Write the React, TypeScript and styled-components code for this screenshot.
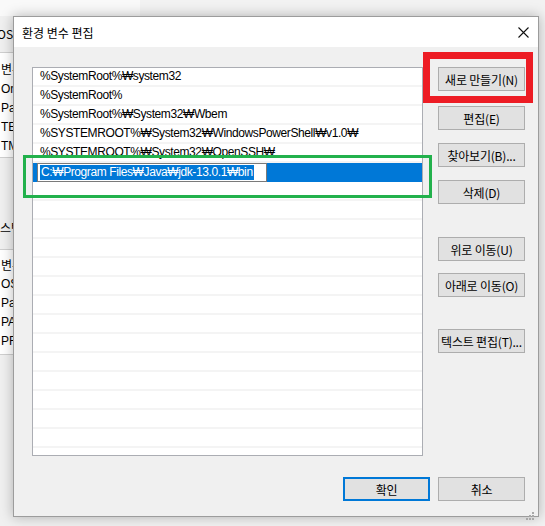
import React from "react";
import styled, { createGlobalStyle } from "styled-components";

const GlobalStyle = createGlobalStyle`
  html, body { margin: 0; padding: 0; width: 545px; height: 526px; overflow: hidden; background: #f2f2f2; }
  #root { width: 545px; height: 526px; }
  * { box-sizing: border-box; }
`;

const KR = `"Noto Sans CJK KR", "Liberation Sans", sans-serif`;
const LATIN = `"Liberation Sans", "DejaVu Sans", "Noto Sans CJK KR", sans-serif`;

const Desktop = styled.div`
  position: relative;
  width: 545px;
  height: 526px;
  overflow: hidden;
  background: #f2f2f2;
  font-family: ${KR};
`;

/* ---------- window behind ---------- */
const BackWindow = styled.div`
  position: absolute;
  left: 0;
  top: 0;
  width: 140px;
  height: 526px;
  display: flex;
  flex-direction: column;
  background: #f0f0f0;
  font-size: 12px;
  color: #000;
`;

const BackTop = styled.div`
  height: 16px;
  background: #f9f9f9;
`;

const BackHeader = styled.div`
  height: 37px;
  display: flex;
  align-items: center;
  padding-bottom: 2px;
  border-bottom: 1px solid #cfcfcf;
  white-space: nowrap;
`;

const BackList = styled.div<{ $h: number }>`
  height: ${(p) => p.$h}px;
  background: #fff;
  border-bottom: 1px solid #cfcfcf;
  padding-top: 4px;
  display: flex;
  flex-direction: column;
`;

const BackRow = styled.div<{ $h?: number }>`
  height: ${(p) => p.$h ?? 19}px;
  display: flex;
  align-items: center;
  padding-left: 1px;
  white-space: nowrap;
  font-family: ${LATIN};
`;

const BackGap = styled.div`
  height: 92px;
  display: flex;
  align-items: flex-end;
  padding-bottom: 13px;
  border-bottom: 1px solid #cfcfcf;
  white-space: nowrap;
`;

const Cut = styled.span<{ $shift: number }>`
  margin-left: ${(p) => p.$shift}px;
`;

/* ---------- dialog ---------- */
const Dialog = styled.div`
  position: absolute;
  left: 13px;
  top: 16px;
  width: 526px;
  height: 501px;
  border: 1px solid #9c9c9c;
  background: #f0f0f0;
  box-shadow: 0 0 12px rgba(0, 0, 0, 0.28);
  display: flex;
  flex-direction: column;
`;

const TitleBar = styled.div`
  height: 30px;
  background: #fff;
  display: flex;
  align-items: center;
  justify-content: space-between;
  padding-left: 8px;
`;

const Title = styled.span`
  font-size: 12px;
  color: #000;
  font-family: ${KR};
`;

const CloseButton = styled.div`
  width: 30px;
  height: 30px;
  display: flex;
  align-items: center;
  justify-content: center;
`;

const Body = styled.div`
  flex: 1;
  padding: 20px 13px 0 18px;
  display: flex;
  flex-direction: column;
`;

const MainRow = styled.div`
  display: flex;
  gap: 15px;
`;

const ListBox = styled.div`
  width: 391px;
  height: 389px;
  background: #fff;
  border: 1px solid #abadb3;
  overflow: hidden;
  display: flex;
  flex-direction: column;
`;

const ListRow = styled.div<{ $selected?: boolean }>`
  flex: none;
  height: 19px;
  display: flex;
  align-items: center;
  padding-left: ${(p) => (p.$selected ? 4 : 7)}px;
  border-bottom: ${(p) => (p.$selected ? "none" : "2px solid #f4f4f4")};
  background: ${(p) => (p.$selected ? "#0078d7" : "#fff")};
  font-family: ${LATIN};
  font-size: 12px;
  line-height: 15px;
  letter-spacing: -0.4px;
  color: #000;
  white-space: nowrap;
  overflow: hidden;
`;

const EditBox = styled.div`
  width: 230px;
  height: 19px;
  border: 1px solid #7a7a7a;
  background: #fff;
  display: flex;
  align-items: center;
  padding-left: 2px;
`;

const Selection = styled.span`
  background: #0078d7;
  color: #fff;
  line-height: 15px;
  padding: 0 1px;
`;

const ButtonColumn = styled.div`
  width: 87px;
  display: flex;
  flex-direction: column;
`;

const Button = styled.div<{ $mt?: number; $default?: boolean }>`
  width: 87px;
  height: 24px;
  margin-top: ${(p) => p.$mt ?? 0}px;
  background: #e1e1e1;
  border: ${(p) => (p.$default ? "2px solid #0078d7" : "1px solid #adadad")};
  display: flex;
  align-items: center;
  justify-content: center;
  font-family: ${KR};
  font-size: 12px;
  color: #000;
  white-space: nowrap;
  letter-spacing: -0.2px;
  overflow: hidden;
`;

const Footer = styled.div`
  margin-top: 21px;
  display: flex;
  justify-content: flex-end;
  gap: 8px;
`;

const Grip = styled.div`
  position: absolute;
  right: 3px;
  bottom: 4px;
  width: 10px;
  height: 10px;
`;

/* ---------- annotations ---------- */
const Highlight = styled.div<{ $x: number; $y: number; $w: number; $h: number; $c: string; $b: number }>`
  position: absolute;
  left: ${(p) => p.$x}px;
  top: ${(p) => p.$y}px;
  width: ${(p) => p.$w}px;
  height: ${(p) => p.$h}px;
  border: ${(p) => p.$b}px solid ${(p) => p.$c};
  pointer-events: none;
`;

const paths = [
  "%SystemRoot%₩system32",
  "%SystemRoot%",
  "%SystemRoot%₩System32₩Wbem",
  "%SYSTEMROOT%₩System32₩WindowsPowerShell₩v1.0₩",
  "%SYSTEMROOT%₩System32₩OpenSSH₩",
];

const buttons: { label: string; mt: number }[] = [
  { label: "새로 만들기(N)", mt: 0 },
  { label: "편집(E)", mt: 15 },
  { label: "찾아보기(B)...", mt: 13 },
  { label: "삭제(D)", mt: 13 },
  { label: "위로 이동(U)", mt: 33 },
  { label: "아래로 이동(O)", mt: 12 },
  { label: "텍스트 편집(T)...", mt: 32 },
];

export default function App() {
  return (
    <Desktop>
      <GlobalStyle />
      <BackWindow>
        <BackTop />
        <BackHeader>
          <Cut $shift={-3}>OS</Cut>
        </BackHeader>
        <BackList $h={105}>
          <BackRow $h={22}>변수</BackRow>
          <BackRow>OneDrive</BackRow>
          <BackRow>Path</BackRow>
          <BackRow>TEMP</BackRow>
          <BackRow>TMP</BackRow>
        </BackList>
        <BackGap>
          <Cut $shift={-11}>시스템 변수</Cut>
        </BackGap>
        <BackList $h={105}>
          <BackRow $h={20}>변수</BackRow>
          <BackRow>OS</BackRow>
          <BackRow>Path</BackRow>
          <BackRow>PATHEXT</BackRow>
          <BackRow>PROCESSOR</BackRow>
        </BackList>
      </BackWindow>

      <Dialog>
        <TitleBar>
          <Title>환경 변수 편집</Title>
          <CloseButton>
            <svg width="11" height="11" viewBox="0 0 11 11">
              <path d="M0.5 0.5 L10.5 10.5 M10.5 0.5 L0.5 10.5" stroke="#111" strokeWidth="1.1" fill="none" />
            </svg>
          </CloseButton>
        </TitleBar>
        <Body>
          <MainRow>
            <ListBox>
              {paths.map((p) => (
                <ListRow key={p}>{p}</ListRow>
              ))}
              <ListRow $selected>
                <EditBox>
                  <Selection>C:₩Program Files₩Java₩jdk-13.0.1₩bin</Selection>
                </EditBox>
              </ListRow>
              {Array.from({ length: 16 }).map((_, i) => (
                <ListRow key={`e${i}`} />
              ))}
            </ListBox>
            <ButtonColumn>
              {buttons.map((b) => (
                <Button key={b.label} $mt={b.mt}>
                  {b.label}
                </Button>
              ))}
            </ButtonColumn>
          </MainRow>
          <Footer>
            <Button $default>확인</Button>
            <Button>취소</Button>
          </Footer>
        </Body>
        <Grip>
          <svg width="10" height="10" viewBox="0 0 10 10">
            {[
              [8, 2],
              [5, 5],
              [8, 5],
              [2, 8],
              [5, 8],
              [8, 8],
            ].map(([x, y]) => (
              <rect key={`${x}-${y}`} x={x - 1} y={y - 1} width="2" height="2" fill="#a8a8a8" />
            ))}
          </svg>
        </Grip>
      </Dialog>

      <Highlight $x={423} $y={52} $w={110} $h={51} $c="#ed1c24" $b={7} />
      <Highlight $x={23} $y={155} $w={409} $h={43} $c="#22b14c" $b={3} />
    </Desktop>
  );
}
